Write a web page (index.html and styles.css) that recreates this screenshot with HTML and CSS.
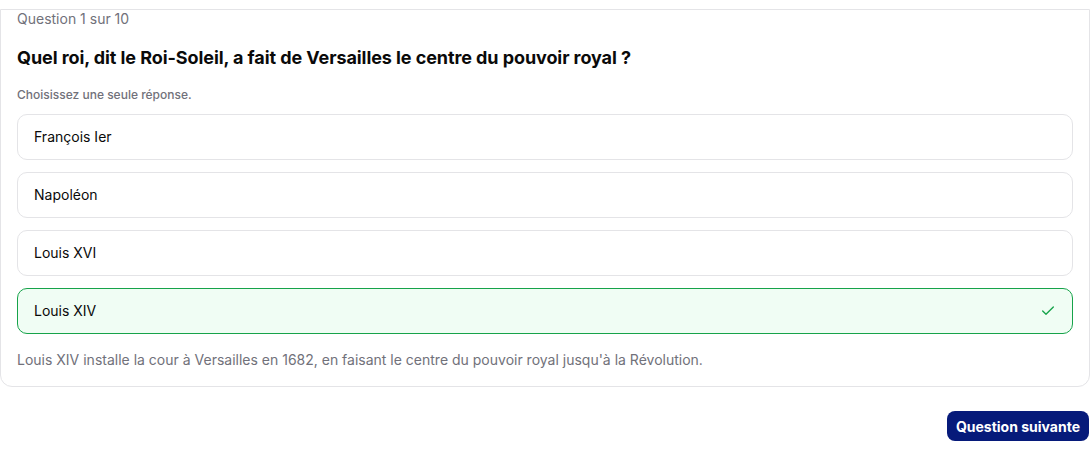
FILE: index.html
```html
<!DOCTYPE html>
<html lang="fr">
<head>
<meta charset="utf-8">
<link rel="stylesheet" href="styles.css">
</head>
<body>
<div class="page">
  <section class="card">
    <div class="counter">Question 1 sur 10</div>
    <h1 class="title">Quel roi, dit le Roi-Soleil, a fait de Versailles le centre du pouvoir royal ?</h1>
    <p class="hint">Choisissez une seule réponse.</p>
    <div class="options">
      <div class="option">François Ier</div>
      <div class="option">Napoléon</div>
      <div class="option">Louis XVI</div>
      <div class="option correct">Louis XIV
        <svg class="check" width="16" height="16" viewBox="0 0 24 24" fill="none" stroke="currentColor" stroke-width="2" stroke-linecap="round" stroke-linejoin="round"><path d="M20 6 9 17l-5-5"/></svg>
      </div>
    </div>
    <p class="explain">Louis XIV installe la cour à Versailles en 1682, en faisant le centre du pouvoir royal jusqu'à la Révolution.</p>
  </section>
  <div class="actions">
    <button class="next">Question suivante</button>
  </div>
</div>
</body>
</html>
```

FILE: styles.css
```css
* { box-sizing: border-box; }
html, body { margin: 0; padding: 0; background: #fff; }
body {
  font-family: Inter, "Noto Sans", "Liberation Sans", sans-serif;
  color: #111;
}
.page { padding-top: 9px; }
.card {
  border: 1px solid #e4e4e7;
  border-radius: 0 0 12px 12px;
  padding: 0 16px 16px 16px;
  background: #fff;
}
.counter {
  font-size: 14px;
  line-height: 18px;
  color: #71717a;
}
.title {
  margin: 17px 0 0;
  font-size: 18px;
  line-height: 26px;
  font-weight: 700;
  letter-spacing: -0.08px;
  color: #0a0a0a;
}
.hint {
  margin: 16px 0 0;
  font-size: 12px;
  line-height: 16px;
  color: #71717a;
  font-weight: 500;
}
.options {
  margin-top: 11px;
  display: flex;
  flex-direction: column;
  gap: 12px;
}
.option {
  height: 46px;
  border: 1px solid #e4e4e7;
  border-radius: 10px;
  padding: 0 16px 1px;
  display: flex;
  align-items: center;
  justify-content: space-between;
  font-size: 14px;
  color: #0a0a0a;
}
.option.correct {
  border-color: #16a34a;
  background: #f0fdf4;
}
.check { color: #16a34a; flex: none; }
.explain {
  margin: 16px 0 0;
  font-size: 14px;
  line-height: 20px;
  color: #71717a;
}
.actions {
  display: flex;
  justify-content: flex-end;
  padding: 24px 1px 0 0;
}
.next {
  height: 30px;
  padding: 0 9px;
  border: 0;
  border-radius: 8px;
  background: #061a7a;
  color: #fff;
  font-family: inherit;
  font-size: 14px;
  font-weight: 700;
}
```
